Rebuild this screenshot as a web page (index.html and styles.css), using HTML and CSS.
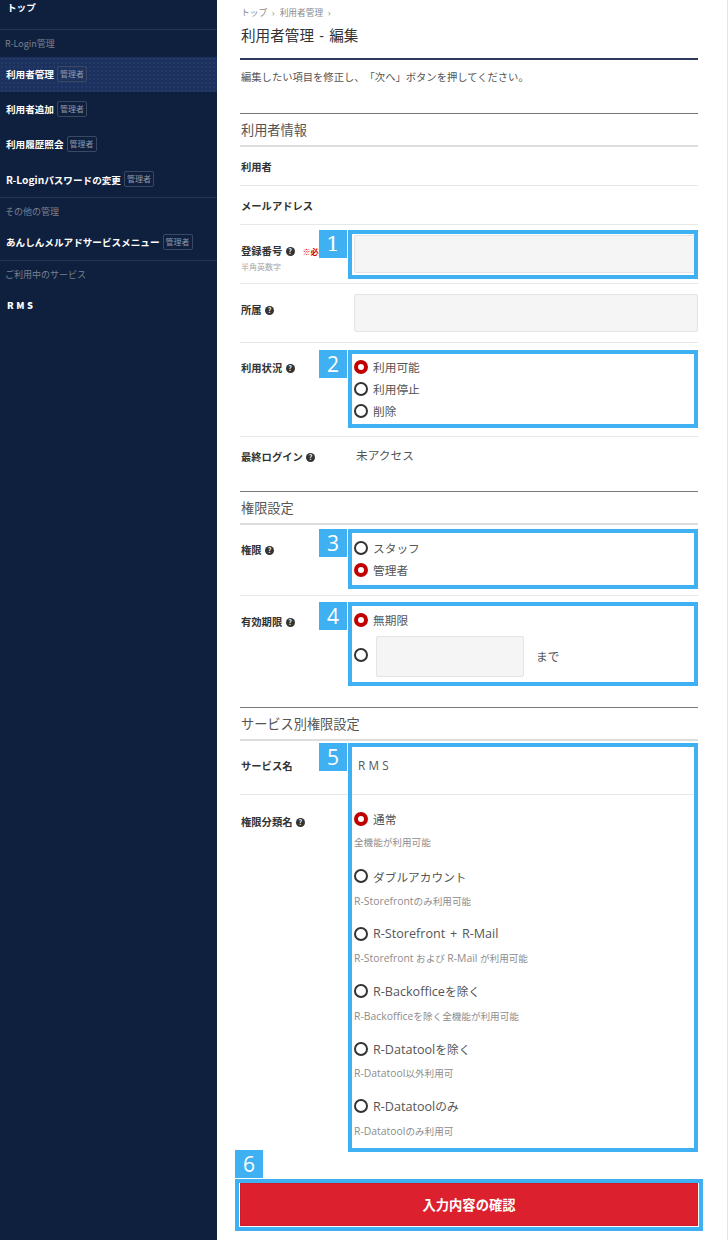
FILE: index.html
```html
<!DOCTYPE html>
<html lang="ja">
<head>
<meta charset="utf-8">
<title>利用者管理 - 編集</title>
<link rel="stylesheet" href="styles.css">
</head>
<body>
<div class="app">
  <nav class="side">
    <a class="top-link">トップ</a>
    <div class="group">R-Login管理</div>
    <a class="item active">利用者管理 <span class="tag">管理者</span></a>
    <a class="item">利用者追加 <span class="tag">管理者</span></a>
    <a class="item">利用履歴照会 <span class="tag">管理者</span></a>
    <a class="item"><span><span class="lat-side">R-Login</span>パスワードの変更</span> <span class="tag">管理者</span></a>
    <div class="group ruled">その他の管理</div>
    <a class="item">あんしんメルアドサービスメニュー <span class="tag">管理者</span></a>
    <div class="group ruled">ご利用中のサービス</div>
    <a class="item rms">RMS</a>
  </nav>

  <main class="main">
    <div class="crumbs"><span>トップ</span><i>›</i><span>利用者管理</span><i>›</i></div>
    <h1 class="title">利用者管理 - 編集</h1>
    <p class="lead">編集したい項目を修正し、「次へ」ボタンを押してください。</p>

    <section class="section first">
      <h2 class="sec-title">利用者情報</h2>
      <div class="row short"><div class="label">利用者</div></div>
      <div class="row short"><div class="label">メールアドレス</div></div>
      <div class="row padded">
        <div class="label low">
          <div class="label-line">登録番号 <span class="help">?</span><span class="req">※必須</span></div>
          <div class="hint">半角英数字</div>
        </div>
        <div class="field"><div class="input"></div></div>
      </div>
      <div class="row padded">
        <div class="label pad16">所属 <span class="help">?</span></div>
        <div class="field"><div class="input"></div></div>
      </div>
      <div class="row radios">
        <div class="label pad5">利用状況 <span class="help">?</span></div>
        <div class="field">
          <label class="radio"><input type="radio" name="st" checked>利用可能</label>
          <label class="radio"><input type="radio" name="st">利用停止</label>
          <label class="radio"><input type="radio" name="st">削除</label>
        </div>
      </div>
      <div class="row last-login">
        <div class="label">最終ログイン <span class="help">?</span></div>
        <div class="field value">未アクセス</div>
      </div>
    </section>

    <section class="section">
      <h2 class="sec-title">権限設定</h2>
      <div class="row role">
        <div class="label pad6">権限 <span class="help">?</span></div>
        <div class="field">
          <label class="radio"><input type="radio" name="ro">スタッフ</label>
          <label class="radio"><input type="radio" name="ro" checked>管理者</label>
        </div>
      </div>
      <div class="row limit">
        <div class="label pad6">有効期限 <span class="help">?</span></div>
        <div class="field">
          <label class="radio"><input type="radio" name="li" checked>無期限</label>
          <div class="until">
            <input class="radio-alone" type="radio" name="li">
            <div class="input date"></div>
            <span class="made">まで</span>
          </div>
        </div>
      </div>
    </section>

    <section class="section">
      <h2 class="sec-title">サービス別権限設定</h2>
      <div class="row service">
        <div class="label pad6">サービス名</div>
        <div class="field rms-value">RMS</div>
      </div>
      <div class="row kinds">
        <div class="label pad13">権限分類名 <span class="help">?</span></div>
        <div class="field">
          <div class="kind"><label class="radio"><input type="radio" name="k" checked>通常</label><p class="sub">全機能が利用可能</p></div>
          <div class="kind"><label class="radio"><input type="radio" name="k">ダブルアカウント</label><p class="sub"><span class="lat">R-Storefront</span>のみ利用可能</p></div>
          <div class="kind"><label class="radio"><input type="radio" name="k"><span><span class="lat">R-Storefront + R-Mail</span></span></label><p class="sub"><span class="lat">R-Storefront</span> および <span class="lat">R-Mail</span> が利用可能</p></div>
          <div class="kind"><label class="radio"><input type="radio" name="k"><span><span class="lat">R-Backoffice</span>を除く</span></label><p class="sub"><span class="lat">R-Backoffice</span>を除く全機能が利用可能</p></div>
          <div class="kind"><label class="radio"><input type="radio" name="k"><span><span class="lat">R-Datatool</span>を除く</span></label><p class="sub"><span class="lat">R-Datatool</span>以外利用可</p></div>
          <div class="kind"><label class="radio"><input type="radio" name="k"><span><span class="lat">R-Datatool</span>のみ</span></label><p class="sub"><span class="lat">R-Datatool</span>のみ利用可</p></div>
        </div>
      </div>
    </section>

    <button class="submit" type="button">入力内容の確認</button>

    <div class="box box1"></div><div class="num num1">1</div>
    <div class="box box2"></div><div class="num num2">2</div>
    <div class="box box3"></div><div class="num num3">3</div>
    <div class="box box4"></div><div class="num num4">4</div>
    <div class="box box5"></div><div class="num num5">5</div>
    <div class="box box6"></div><div class="num num6">6</div>
  </main>
</div>
</body>
</html>
```
FILE: styles.css
```css
* { box-sizing: border-box; }
html, body { margin: 0; padding: 0; background: #fff; }
body {
  font-family: "Open Sans", "Noto Sans CJK JP", sans-serif;
  color: #333;
  width: 728px;
  height: 1240px;
  overflow: hidden;
  text-spacing-trim: space-all;
}
.app { display: flex; height: 1240px; }

/* sidebar */
.side {
  width: 217px;
  flex: none;
  background: #0f1f3e;
  color: #fff;
  font-family: "Noto Sans CJK JP", sans-serif;
}
.top-link {
  display: block;
  height: 30px;
  padding-left: 7px;
  font-size: 9.6px;
  font-weight: 700;
  line-height: 14px;
  border-bottom: 1px solid #27344f;
}
.group {
  height: 27px;
  padding-left: 5px;
  font-size: 9px;
  line-height: 27px;
  color: #79818f;
}
.group.ruled { height: 28px; border-top: 1px solid #27344f; }
.item {
  display: flex;
  align-items: center;
  gap: 3px;
  height: 35px;
  padding: 0 0 1px 6px;
  font-size: 9.6px;
  font-weight: 700;
  white-space: nowrap;
}
.item.active {
  background-color: #1c315e;
  background-image: radial-gradient(circle, #2d4474 0.6px, transparent 0.8px);
  background-size: 4px 4px;
}
.item.rms { padding-left: 7px; letter-spacing: 2.6px; font-size: 9.4px; font-weight: 900; }
.lat-side { font-size: 10.2px; }
.tag {
  display: block;
  width: 30px;
  height: 16px;
  border: 1px solid #3b4861;
  border-radius: 2px;
  font-size: 8px;
  font-weight: 400;
  line-height: 14px;
  text-align: center;
  color: #8f98a8;
}

/* main */
.main {
  position: relative;
  flex: 1;
  padding: 6px 29px 0 23px;
  border-right: 1px solid #e4e4e4;
}
.crumbs {
  display: flex;
  gap: 5px;
  height: 14px;
  padding-left: 1px;
  font-size: 8.7px;
  line-height: 14px;
  color: #8b8b8b;
}
.crumbs i { font-style: normal; }
.title {
  margin: 4px 0 0;
  height: 36px;
  padding-left: 1px;
  font-size: 14.6px;
  font-weight: 400;
  line-height: 22px;
  word-spacing: 1.5px;
  color: #333;
  border-bottom: 2px solid #2f3a5a;
}
.lead {
  margin: 0;
  height: 53px;
  padding: 9px 0 0 1px;
  font-size: 10.3px;
  line-height: 16px;
  color: #555;
}
.section { border-top: 1px solid #777; }
.sec-title {
  margin: 0;
  height: 33px;
  padding-left: 1px;
  font-size: 13.2px;
  font-weight: 400;
  line-height: 33px;
  color: #555;
  border-bottom: 2px solid #ddd;
}
.row {
  display: flex;
  border-bottom: 1px solid #e8e8e8;
}
.label {
  width: 114px;
  flex: none;
  padding-left: 1px;
  font-family: "Noto Sans CJK JP", sans-serif;
  font-size: 10.3px;
  font-weight: 700;
  line-height: 14px;
  color: #333;
  white-space: nowrap;
}
.field { flex: 1; min-width: 0; }
.short { height: 39px; }
.short .label { padding-top: 13px; }
.padded { height: 59px; padding: 10px 0; }
.low { padding-top: 9px; }
.label-line { display: block; }
.pad16 { padding-top: 9px; }
.pad5 { padding-top: 5px; }
.pad6 { padding-top: 11px; }
.pad13 { padding-top: 20px; }
.help {
  display: inline-block;
  width: 9px;
  height: 9px;
  margin-left: 1px;
  border-radius: 50%;
  background: #333;
  color: #fff;
  font-size: 7px;
  font-weight: 700;
  line-height: 9px;
  text-align: center;
  vertical-align: 1px;
}
.req {
  margin-left: 8px;
  font-size: 8px;
  color: #d40000;
}
.hint {
  margin-top: 1px;
  font-size: 8px;
  font-weight: 400;
  line-height: 14px;
  color: #a5a5a5;
}
.input {
  height: 38px;
  background: #f5f5f5;
  border: 1px solid #e4e4e4;
  border-radius: 2px;
}
.radio {
  display: flex;
  align-items: center;
  gap: 5px;
  height: 22px;
  padding-bottom: 1px;
  font-size: 11.7px;
  color: #555;
  white-space: nowrap;
}
.radio .lat { font-size: 12.6px; word-spacing: 1.5px; }
.radio input, .radio-alone {
  appearance: none;
  flex: none;
  display: block;
  width: 14px;
  height: 14px;
  margin: 0;
  background: #fff;
  border: 2px solid #333;
  border-radius: 50%;
}
.radio-alone { margin-bottom: 4px; }
.radio input:checked { border: 4.6px solid #c00000; }
.radios { height: 94px; padding-top: 13px; }
.radios .label { padding-top: 5px; }
.last-login { height: 54px; border-bottom: 0; }
.last-login .label { padding-top: 13px; }
.value {
  padding: 9px 0 0 2px;
  font-size: 11.7px;
  line-height: 18px;
  color: #555;
}
.role { height: 71px; padding-top: 12px; }
.role .label { padding-top: 6px; }
.limit { height: 111px; padding-top: 13px; border-bottom: 0; }
.limit .label { padding-top: 6px; }
.until { display: flex; align-items: center; margin-top: 5px; height: 41px; }
.date { width: 148px; height: 41px; margin-left: 8px; }
.made { margin: 0 0 2px 12px; font-size: 11.7px; color: #555; }
.service { height: 54px; }
.service .label { padding-top: 18px; }
.rms-value {
  padding: 15px 0 0 4px;
  font-size: 11.7px;
  line-height: 18px;
  letter-spacing: 3.2px;
  color: #555;
}
.kinds { border-bottom: 0; padding-top: 13px; }
.kinds .label { padding-top: 7px; }
.kind { height: 57.6px; }
.sub {
  margin: 5px 0 0;
  font-size: 9.6px;
  line-height: 16px;
  color: #8d8d8d;
  white-space: nowrap;
}
.sub .lat { font-size: 10.4px; }
.submit {
  display: block;
  width: 458px;
  height: 43px;
  margin-top: 29.5px;
  padding: 0;
  border: 1px solid #d01c2b;
  background: #dc202e;
  color: #fff;
  font-family: "Noto Sans CJK JP", sans-serif;
  font-size: 13.3px;
  font-weight: 700;
}

/* numbered call-outs laid over the form */
.box {
  position: absolute;
  border: 4px solid #3fb1f2;
  pointer-events: none;
}
.box1 { left: 131px; top: 230px; width: 350px; height: 49px; }
.box2 { left: 131px; top: 350px; width: 350px; height: 78px; }
.box3 { left: 131px; top: 529px; width: 350px; height: 60px; }
.box4 { left: 131px; top: 602px; width: 350px; height: 84px; }
.box5 { left: 131px; top: 743px; width: 350px; height: 409px; }
.box6 { left: 18px; top: 1179px; width: 468px; height: 52px; }
.num {
  position: absolute;
  width: 28px;
  height: 28px;
  background: #3fb1f2;
  color: #fff;
  font-family: "Open Sans", sans-serif;
  font-size: 21px;
  line-height: 28px;
  text-align: center;
}
.num1 { left: 102px; top: 230px; font-family: "DejaVu Serif", serif; }
.num2 { left: 102px; top: 350px; }
.num3 { left: 102px; top: 529px; }
.num4 { left: 102px; top: 602px; }
.num5 { left: 102px; top: 743px; }
.num6 { left: 18px; top: 1150px; }
```
